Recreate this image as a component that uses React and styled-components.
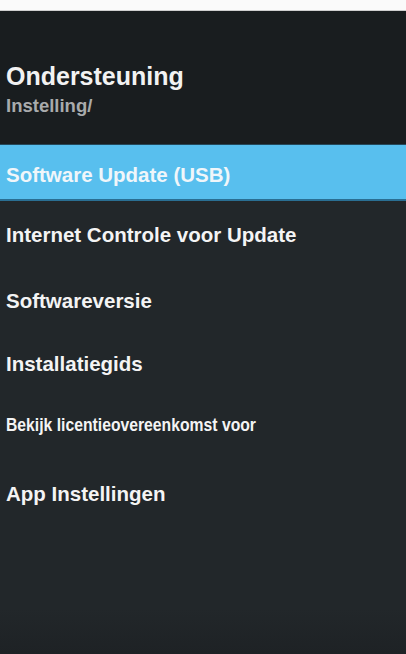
import React from 'react';
import styled, { createGlobalStyle } from 'styled-components';

const GlobalStyle = createGlobalStyle`
  html, body {
    margin: 0;
    padding: 0;
    background: #ffffff;
  }
  body {
    font-family: "Liberation Sans", Arial, sans-serif;
  }
`;

const Screen = styled.div`
  width: 406px;
  height: 654px;
  display: flex;
  flex-direction: column;
  background: #ffffff;
`;

const TopStrip = styled.div`
  height: 10px;
  background: #fafafa;
  border-bottom: 1px solid #cfcfcf;
`;

const Panel = styled.div`
  flex: 1;
  display: flex;
  flex-direction: column;
  background: linear-gradient(to bottom, #22272a 0%, #22272a 93%, #1e2225 100%);
`;

const Header = styled.div`
  height: 134px;
  padding: 50px 0 0 6px;
  box-sizing: border-box;
  background: #191d1f;
  border-bottom: 1px solid #24485a;
`;

const Title = styled.div`
  color: #f2f2f2;
  font-size: 25px;
  font-weight: bold;
  line-height: 30px;
`;

const Crumb = styled.div`
  color: #a9abac;
  font-size: 18.5px;
  font-weight: bold;
  line-height: 20px;
  margin-top: 5px;
`;

const Menu = styled.div`
  display: flex;
  flex-direction: column;
`;

const Item = styled.div`
  height: ${p => p.h}px;
  display: flex;
  align-items: center;
  padding-left: 6px;
  box-sizing: border-box;
  color: #f4f4f4;
  font-weight: bold;
  font-size: ${p => (p.narrow ? 18.5 : 20.5)}px;
  white-space: nowrap;
  background: ${p => (p.active ? '#58bfee' : 'transparent')};
  ${p => p.active && 'padding-top: 5px; border-bottom: 2px solid #2a6f93; color: #f0f6fa;'}
`;

const Narrow = styled.span`
  display: inline-block;
  transform: scaleX(0.85);
  transform-origin: left center;
`;

const items = [
  { label: 'Software Update (USB)', active: true, h: 56 },
  { label: 'Internet Controle voor Update', h: 68 },
  { label: 'Softwareversie', h: 64 },
  { label: 'Installatiegids', h: 61 },
  { label: 'Bekijk licentieovereenkomst voor', narrow: true, h: 61 },
  { label: 'App Instellingen', h: 78 },
];

export default function App() {
  return (
    <Screen>
      <GlobalStyle />
      <TopStrip />
      <Panel>
        <Header>
          <Title>Ondersteuning</Title>
          <Crumb>Instelling/</Crumb>
        </Header>
        <Menu>
          {items.map(it => (
            <Item key={it.label} active={it.active} narrow={it.narrow} h={it.h}>
              {it.narrow ? <Narrow>{it.label}</Narrow> : it.label}
            </Item>
          ))}
        </Menu>
      </Panel>
    </Screen>
  );
}
